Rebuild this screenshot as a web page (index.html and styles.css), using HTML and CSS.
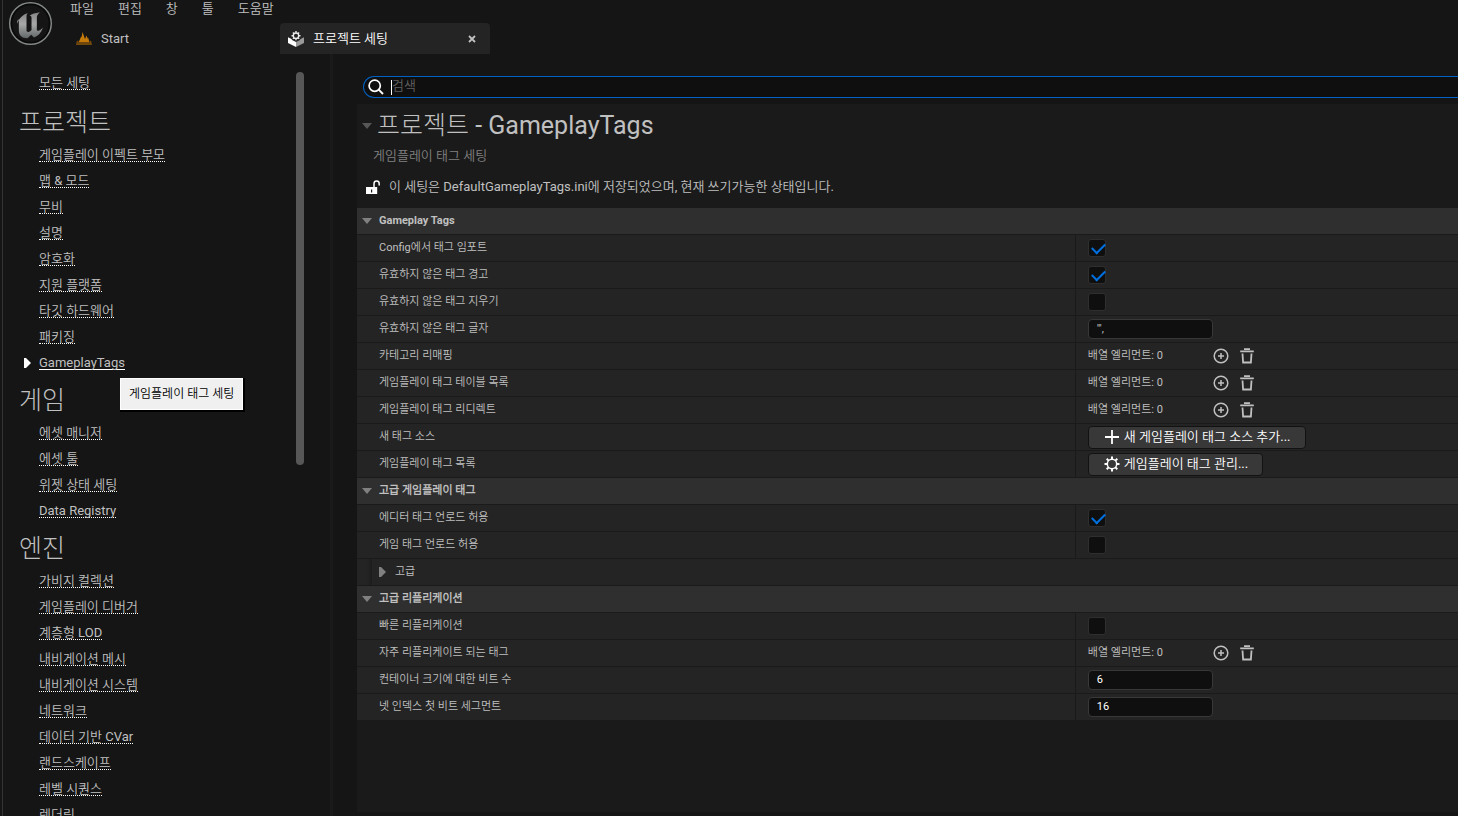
FILE: index.html
```
<!DOCTYPE html>
<html lang="ko">
<head>
<meta charset="utf-8">
<title>프로젝트 세팅</title>
<link rel="stylesheet" href="styles.css">
</head>
<body>
<svg class="defs" aria-hidden="true">
  <symbol id="i-add" viewBox="0 0 16 16"><circle cx="8" cy="8" r="6.800" fill="none" stroke="currentColor" stroke-width="1.500"/><path d="M8 5v6M5 8h6" stroke="currentColor" stroke-width="1.500"/></symbol>
  <symbol id="i-trash" viewBox="0 0 16 16"><path d="M5 1.200h6M1.200 3.300h13.600" stroke="currentColor" stroke-width="1.700"/><path d="M3.500 5.500l.6 9h7.800l.6-9" fill="none" stroke="currentColor" stroke-width="1.800"/></symbol>
  <symbol id="i-down" viewBox="0 0 10 6"><path d="M0 0h10L5 6z" fill="currentColor"/></symbol>
  <symbol id="i-right" viewBox="0 0 7 10"><path d="M0 0h2l5 5-5 5H0z" fill="currentColor"/></symbol>
</svg>
<div class="window">
  <header class="top">
    <svg class="logo" viewBox="0 0 44 44" role="img" aria-label="Unreal Engine">
      <defs><linearGradient id="metal" x1="0" y1="0" x2="0" y2="1"><stop offset="0" stop-color="#858585"/><stop offset=".45" stop-color="#a8a8a8"/><stop offset="1" stop-color="#626868"/></linearGradient></defs>
      <circle cx="22" cy="22" r="20.300" fill="#151515" stroke="#858888" stroke-width="1.500"/>
      <circle cx="22" cy="22" r="18.600" fill="none" stroke="#090909" stroke-width="1.500"/>
      <path fill="url(#metal)" d="M9 22.500c1.500-5.500 5.500-9.200 10.500-10.700-1 1-1.400 2-1.400 3.500v13.300c0 1.400 1.300 2 2.600 1.400 1-.4 1.800-1 2.300-1.700V16.300c0-1.500-.8-2-2-1.600 2.300-2.200 5.500-2.700 10.200-3.600-2.300 1.900-3 3.500-3 5.700v11c0 1.400 1 1.800 2.300 1 1.200-.6 2.200-1.500 3.500-3-1.600 5.400-4.300 8-8.600 9.800l-2.700-2.600-3.600 3.400c-6-.1-8.500-2.900-8.500-8.100V19.500c0-2.300-.6-1.500-1.600.2z"/>
    </svg>
    <div class="bars">
      <nav class="menu">
        <button>파일</button><button>편집</button><button>창</button><button>툴</button><button>도움말</button>
      </nav>
      <div class="tabs">
        <button class="tab">
          <svg width="16" height="14" viewBox="0 0 16 14"><path fill="#c47a0a" d="M2.500 10.500 5.200 4.500 5.600 5 6.500 0l2.500 7L10.500 3.500l1.200 3 .6-.5 1.200 4.500z"/><path fill="#6f470c" d="M.8 9 2.200 8.500l.3 2h11l.3-2 1.400.5L16 13H0z"/></svg>
          Start
        </button>
        <div class="tab active">
          <svg width="16" height="16" viewBox="0 0 16 16"><path fill="#fff" d="M0 6.300l8 4V16L0 12z"/><path fill="#999" d="M8 10.300l8-4V12L8 16z"/><path fill="#242424" d="M2 3h12l-2 6-4 2-4-2z"/><circle cx="8" cy="4.700" r="2.700" fill="none" stroke="#eee" stroke-width="1.300"/><path stroke="#eee" stroke-width="1.400" d="M8 0v1.800M8 7.600v1.600M3.500 4.700h1.600M10.900 4.700h1.600M4.900 1.600 6 2.700M10 6.700l1.100 1.100M11.100 1.600 10 2.700M6 6.700 4.900 7.800"/></svg>
          <span>프로젝트 세팅</span>
          <button class="close" aria-label="닫기"><svg width="8" height="8" viewBox="0 0 8 8"><path d="M1 1l6 6M7 1 1 7" stroke="#c0c0c0" stroke-width="1.800"/></svg></button>
        </div>
      </div>
    </div>
  </header>
  <div class="body">
    <aside class="side">
      <nav class="sections">
        <ul class="all"><li><a href="#">모든 세팅</a></li></ul>
        <h2>프로젝트</h2>
        <ul>
          <li><a href="#">게임플레이 이펙트 부모</a></li>
          <li><a href="#">맵 &amp; 모드</a></li>
          <li><a href="#">무비</a></li>
          <li><a href="#">설명</a></li>
          <li><a href="#">암호화</a></li>
          <li><a href="#">지원 플랫폼</a></li>
          <li><a href="#">타깃 하드웨어</a></li>
          <li><a href="#">패키징</a></li>
          <li class="current"><svg width="7" height="10"><use href="#i-right"/></svg><a href="#">GameplayTags</a><span class="tooltip" role="tooltip">게임플레이 태그 세팅</span></li>
        </ul>
        <h2>게임</h2>
        <ul>
          <li><a href="#">에셋 매니저</a></li>
          <li><a href="#">에셋 툴</a></li>
          <li><a href="#">위젯 상태 세팅</a></li>
          <li><a href="#">Data Registry</a></li>
        </ul>
        <h2>엔진</h2>
        <ul>
          <li><a href="#">가비지 컬렉션</a></li>
          <li><a href="#">게임플레이 디버거</a></li>
          <li><a href="#">계층형 LOD</a></li>
          <li><a href="#">내비게이션 메시</a></li>
          <li><a href="#">내비게이션 시스템</a></li>
          <li><a href="#">네트워크</a></li>
          <li><a href="#">데이터 기반 CVar</a></li>
          <li><a href="#">랜드스케이프</a></li>
          <li><a href="#">레벨 시퀀스</a></li>
          <li><a href="#">렌더링</a></li>
        </ul>
      </nav>
      <div class="track"><div class="thumb"></div></div>
    </aside>
    <main class="main">
      <label class="search">
        <svg width="16" height="16" viewBox="0 0 16 16"><circle cx="6.700" cy="6.700" r="5.600" fill="none" stroke="#fff" stroke-width="1.700"/><path d="M10.700 10.700 15 15" stroke="#fff" stroke-width="1.900"/></svg>
        <span class="caret"></span>
        <input type="text" placeholder="검색" aria-label="검색">
      </label>
      <section class="panel">
        <h1><svg width="10" height="6"><use href="#i-down"/></svg>프로젝트 - GameplayTags</h1>
        <p class="sub">게임플레이 태그 세팅</p>
        <p class="status"><svg width="15" height="15" viewBox="0 0 15 15"><path fill="#fff" fill-rule="evenodd" d="M0 7h11.200v7H0zM5 9.500h1.200v3H5z"/><path d="M8 7V3.700a2.600 2.600 0 0 1 5.200 0v1.800" fill="none" stroke="#fff" stroke-width="1.500"/></svg>이 세팅은 DefaultGameplayTags.ini에 저장되었으며, 현재 쓰기가능한 상태입니다.</p>
        <table class="props">
          <colgroup><col class="names"><col></colgroup>
          <tbody>
            <tr class="group"><th colspan="2"><svg width="10" height="6"><use href="#i-down"/></svg>Gameplay Tags</th></tr>
            <tr><th><label for="p1">Config에서 태그 임포트</label></th><td><input type="checkbox" id="p1" checked></td></tr>
            <tr><th><label for="p2">유효하지 않은 태그 경고</label></th><td><input type="checkbox" id="p2" checked></td></tr>
            <tr><th><label for="p3">유효하지 않은 태그 지우기</label></th><td><input type="checkbox" id="p3"></td></tr>
            <tr><th><label for="p4">유효하지 않은 태그 글자</label></th><td><input type="text" id="p4" class="dim" value="&quot;',"></td></tr>
            <tr><th>카테고리 리매핑</th><td><div class="array"><span>배열 엘리먼트: 0</span><button aria-label="추가"><svg><use href="#i-add"/></svg></button><button aria-label="비우기"><svg><use href="#i-trash"/></svg></button></div></td></tr>
            <tr><th>게임플레이 태그 테이블 목록</th><td><div class="array"><span>배열 엘리먼트: 0</span><button aria-label="추가"><svg><use href="#i-add"/></svg></button><button aria-label="비우기"><svg><use href="#i-trash"/></svg></button></div></td></tr>
            <tr><th>게임플레이 태그 리디렉트</th><td><div class="array"><span>배열 엘리먼트: 0</span><button aria-label="추가"><svg><use href="#i-add"/></svg></button><button aria-label="비우기"><svg><use href="#i-trash"/></svg></button></div></td></tr>
            <tr><th>새 태그 소스</th><td><button class="action"><svg viewBox="0 0 16 16"><path d="M8 1v14M1 8h14" stroke="#fff" stroke-width="1.800"/></svg>새 게임플레이 태그 소스 추가...</button></td></tr>
            <tr><th>게임플레이 태그 목록</th><td><button class="action"><svg viewBox="0 0 16 16"><circle cx="8" cy="8" r="4.700" fill="none" stroke="#fff" stroke-width="1.500"/><path stroke="#fff" stroke-width="2" d="M8 .5v2.700M8 12.800v2.700M.5 8h2.700M12.800 8h2.700M2.700 2.700l1.900 1.900M11.400 11.400l1.900 1.900M13.300 2.700l-1.900 1.900M4.600 11.400l-1.900 1.900"/></svg>게임플레이 태그 관리...</button></td></tr>
            <tr class="group"><th colspan="2"><svg width="10" height="6"><use href="#i-down"/></svg>고급 게임플레이 태그</th></tr>
            <tr><th><label for="p5">에디터 태그 언로드 허용</label></th><td><input type="checkbox" id="p5" checked></td></tr>
            <tr><th><label for="p6">게임 태그 언로드 허용</label></th><td><input type="checkbox" id="p6"></td></tr>
            <tr class="nested"><th colspan="2"><svg width="7" height="10"><use href="#i-right"/></svg>고급</th></tr>
            <tr class="group"><th colspan="2"><svg width="10" height="6"><use href="#i-down"/></svg>고급 리플리케이션</th></tr>
            <tr><th><label for="p7">빠른 리플리케이션</label></th><td><input type="checkbox" id="p7"></td></tr>
            <tr><th>자주 리플리케이트 되는 태그</th><td><div class="array"><span>배열 엘리먼트: 0</span><button aria-label="추가"><svg><use href="#i-add"/></svg></button><button aria-label="비우기"><svg><use href="#i-trash"/></svg></button></div></td></tr>
            <tr><th><label for="p8">컨테이너 크기에 대한 비트 수</label></th><td><input type="text" id="p8" value="6"></td></tr>
            <tr><th><label for="p9">넷 인덱스 첫 비트 세그먼트</label></th><td><input type="text" id="p9" value="16"></td></tr>
          </tbody>
        </table>
      </section>
    </main>
  </div>
</div>
</body>
</html>
```
FILE: styles.css
```
* { box-sizing: border-box; }
body {
  margin: 0;
  background: #151515;
  color: #c0c0c0;
  font: 13px/20px Roboto, "Noto Sans CJK KR DemiLight", "Noto Sans CJK KR", sans-serif;
}
button, input { font: inherit; color: inherit; }
button { background: none; border: 0; padding: 0; }
h1, h2, p, ul { margin: 0; padding: 0; font-weight: 400; }
h1, h2 { font-family: Roboto, "Noto Sans CJK KR Light", "Noto Sans CJK KR", sans-serif; }
ul { list-style: none; }
svg { flex: none; }
.defs { display: none; }

.window {
  display: flex;
  flex-direction: column;
  height: 100vh;
  overflow: hidden;
  margin-left: 2px;
  border-left: 1px solid #343434;
}

.top { display: flex; gap: 16px; padding-left: 5px; }
.logo { width: 45px; height: 45px; margin-top: 1px; }
.bars { flex: 1; }
.menu { display: flex; gap: 24px; height: 23px; padding-left: 1px; line-height: 18px; align-items: flex-start; }
.tabs { display: flex; }
.tab { display: flex; align-items: center; height: 31px; width: 211px; padding-left: 7px; gap: 9px; }
.tab.active { width: 210px; padding-left: 8px; background: #242424; border-radius: 4px 4px 0 0; color: #fff; }
.close { display: flex; margin-left: auto; padding-right: 14px; }

.body { flex: 1; display: flex; min-height: 0; }
.side {
  display: flex;
  justify-content: space-between;
  width: 330px;
  flex: none;
  border-right: 3px solid #1a1a1a;
  padding: 16px 26px 0 16px;
}
.sections { flex: 1; }
.sections h2 { font-size: 25px; line-height: 38px; padding-top: 6px; }
.all { padding-bottom: 2px; }
.sections li { position: relative; display: flex; align-items: flex-start; height: 26px; padding: 2px 0 0 20px; }
.sections a { height: 18px; line-height: 21px; color: inherit; text-decoration: none; border-bottom: 1px dotted #fff; }
.sections .current { padding-left: 5px; gap: 8px; }
.current a { border-bottom-style: solid; }
.current svg { color: #fff; margin-top: 6px; }
.tooltip {
  position: absolute;
  left: 101px;
  top: 28px;
  padding: 5px 8px;
  background: #f0f0f0;
  border: 1px solid #fff;
  box-shadow: 1px 1px 0 1px #000;
  color: #000;
  font-size: 12px;
  white-space: nowrap;
  z-index: 1;
}
.track { width: 8px; padding-top: 2px; }
.thumb { height: 393px; border-radius: 4px; background: #575757; }

.main { flex: 1; display: flex; flex-direction: column; padding: 22px 0 4px 24px; min-width: 0; }
.search {
  display: flex;
  align-items: center;
  height: 22px;
  margin: 0 0 6px 6px;
  padding-left: 4px;
  background: #0f0f0f;
  border: 1px solid #0062c4;
  border-right: 0;
  border-radius: 11px 0 0 11px;
}
.caret { width: 1px; height: 15px; margin-left: 7px; background: #fff; }
.search input { flex: 1; border: 0; outline: 0; padding: 0 0 2px; background: none; height: 20px; }
.search input::placeholder { color: #606060; opacity: 1; }

.panel { flex: 1; background: #1a1a1a; }
.panel h1 { display: flex; align-items: center; gap: 5px; padding: 4px 0 0 5px; font-size: 25px; line-height: 36px; }
.group svg, .nested svg { color: #808080; }
h1 svg { color: #575757; }
.sub { padding: 2px 0 0 16px; color: #808080; }
.status { display: flex; align-items: center; gap: 8px; padding: 11px 0 11px 9px; }

.props { width: 100%; table-layout: fixed; border-spacing: 0; font-size: 11px; line-height: 16px; }
.names { width: 65.2%; }
.props th, .props td {
  height: 27px;
  padding: 0;
  background: #242424;
  border-bottom: 1px solid #1a1a1a;
  text-align: left;
  vertical-align: middle;
  font-weight: 400;
}
.props th { padding-left: 22px; }
.props td { padding-left: 12px; border-left: 1px solid #1a1a1a; }
.props .group th { padding-left: 5px; background: #2f2f2f; font-weight: 700; }
.group svg { margin-right: 7px; }
.props .nested th { background: linear-gradient(90deg, #242424 10px, #1c1c1c 15px, #242424 15px); }
.nested svg { margin-right: 9px; vertical-align: middle; }

.props input { display: block; margin: 0; border: 1px solid #383838; background: #0f0f0f; }
.props input[type="checkbox"] { appearance: none; width: 18px; height: 18px; border-color: #2f2f2f; border-radius: 3px; }
.props input[type="checkbox"]:checked::after {
  content: "";
  display: block;
  width: 11px;
  height: 6px;
  margin: 3px;
  border: solid #0070e0;
  border-width: 0 0 2px 2px;
  transform: rotate(-45deg);
}
.props input[type="text"] { width: 125px; height: 20px; padding: 0 8px 2px; border-radius: 4px; color: #fff; }
.props input.dim { color: #c0c0c0; }
.array { display: flex; align-items: center; gap: 10px; }
.array span { width: 115px; }
.array button { display: flex; }
.array svg { width: 16px; height: 16px; }
.action {
  display: flex;
  align-items: center;
  gap: 4px;
  height: 23px;
  padding: 0 14px 0 15px;
  background: #383838;
  border: 1px solid #121212;
  border-radius: 4px;
  color: #fff;
  font-size: 13px;
}
.action svg { width: 16px; height: 16px; }
```
